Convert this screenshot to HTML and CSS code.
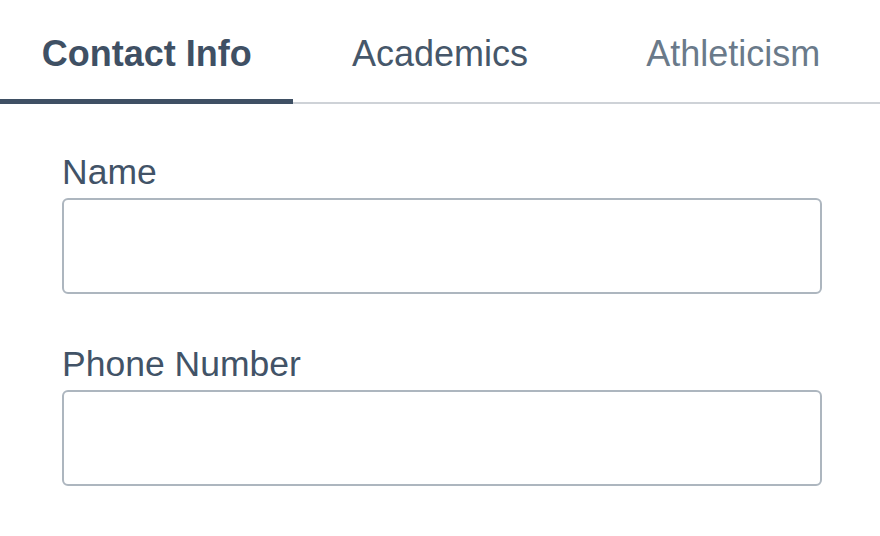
FILE: index.html
```html
<!DOCTYPE html>
<html>
<head>
<meta charset="utf-8">
<link rel="stylesheet" href="styles.css">
</head>
<body>
<div class="tabs">
  <div class="tab active">Contact Info</div>
  <div class="tab">Academics</div>
  <div class="tab disabled">Athleticism</div>
</div>
<form class="form">
  <div class="field">
    <label class="label">Name</label>
    <input class="input" type="text">
  </div>
  <div class="field">
    <label class="label">Phone Number</label>
    <input class="input" type="text">
  </div>
</form>
</body>
</html>
```
FILE: styles.css
```css
html, body {
  margin: 0;
  padding: 0;
  background: #ffffff;
  font-family: "Liberation Sans", Arial, sans-serif;
}
.tabs {
  display: flex;
  height: 102px;
  border-bottom: 2px solid #ced2d7;
}
.tab {
  flex: 1;
  display: flex;
  align-items: center;
  justify-content: center;
  font-size: 36px;
  color: #46576a;
  padding-top: 5px;
  box-sizing: border-box;
  position: relative;
}
.tab.active {
  font-weight: bold;
  color: #3f5064;
}
.tab.active::after {
  content: "";
  position: absolute;
  left: 0;
  right: 0;
  bottom: -2px;
  height: 5px;
  background: #3f5064;
}
.tab.disabled {
  color: #6a7a8a;
}
.form {
  display: flex;
  flex-direction: column;
  gap: 50px;
  padding: 48px 58px 0 62px;
}
.field {
  display: flex;
  flex-direction: column;
}
.label {
  font-size: 35.5px;
  color: #425367;
  line-height: 40px;
  margin-bottom: 6px;
}
.input {
  margin: 0;
  height: 96px;
  box-sizing: border-box;
  border: 2px solid #adb6bf;
  border-radius: 6px;
  background: #fff;
  outline: none;
}
```
